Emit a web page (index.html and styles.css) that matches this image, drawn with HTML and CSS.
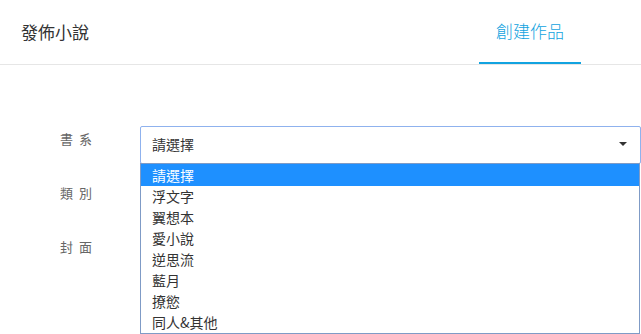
FILE: index.html
```html
<!DOCTYPE html>
<html lang="zh-Hant">
<head>
    <meta charset="UTF-8">
    <meta name="viewport" content="width=device-width, initial-scale=1.0">
    <title>發佈小說</title>
    <link rel="stylesheet" href="styles.css">
</head>
<body>
    <header class="header">
        <h1 class="title">發佈小說</h1>
        <nav class="tabs">
            <a class="tab active" href="#">創建作品</a>
        </nav>
    </header>
    <form class="form">
        <div class="row">
            <label class="label">書系</label>
            <div class="field">
                <div class="select">
                    <span>請選擇</span>
                    <span class="arrow"></span>
                </div>
                <ul class="options">
                    <li class="selected">請選擇</li>
                    <li>浮文字</li>
                    <li>翼想本</li>
                    <li>愛小說</li>
                    <li>逆思流</li>
                    <li>藍月</li>
                    <li>撩慾</li>
                    <li>同人&amp;其他</li>
                </ul>
            </div>
        </div>
        <div class="row">
            <label class="label">類別</label>
        </div>
        <div class="row">
            <label class="label">封面</label>
        </div>
    </form>
</body>
</html>
```

FILE: styles.css
```css
html, body {
    min-height: 100%;
}
body {
    margin: 0;
    min-height: 334px;
    font-family: "Noto Sans CJK TC", "Noto Sans", sans-serif;
    background-color: #fff;
    color: #333;
}
.header {
    display: flex;
    justify-content: space-between;
    height: 64px;
    border-bottom: 1px solid #e6e6e6;
}
.title {
    margin: 0;
    padding-left: 21px;
    font-size: 17px;
    font-weight: 400;
    line-height: 64px;
    color: #333;
}
.tabs {
    display: flex;
    margin-right: 60px;
}
.tab {
    width: 102px;
    text-align: center;
    font-size: 17px;
    font-weight: 300;
    line-height: 62px;
    color: #12a3e0;
    text-decoration: none;
    border-bottom: 2px solid #12a3e0;
}
.form {
    padding-top: 61px;
    min-height: 208px;
}
.row {
    display: flex;
    height: 54px;
}
.label {
    flex: 0 0 140px;
    padding-left: 60px;
    box-sizing: border-box;
    padding-top: 3px;
    font-size: 13px;
    letter-spacing: 6px;
    color: #666;
}
.field {
    position: relative;
    flex: 1;
}
.select {
    display: flex;
    justify-content: space-between;
    align-items: center;
    height: 38px;
    box-sizing: border-box;
    padding: 0 12px 2px 11px;
    border: 1px solid #8fb2ee;
    border-radius: 2px;
    font-size: 14px;
    color: #333;
}
.arrow {
    width: 0;
    height: 0;
    border-left: 4px solid transparent;
    border-right: 4px solid transparent;
    border-top: 4px solid #333;
    margin-right: 1px;
}
.options {
    position: absolute;
    top: 37px;
    left: 0;
    right: 1px;
    margin: 0;
    padding: 0;
    list-style: none;
    background: #fff;
    border: 1px solid #7f9bc6;
    font-size: 14px;
    color: #333;
}
.options li {
    height: 21px;
    line-height: 21px;
    padding-left: 11px;
}
.options li.selected {
    height: 22px;
    line-height: 22px;
    background-color: #1e90ff;
    color: #fff;
}
```
